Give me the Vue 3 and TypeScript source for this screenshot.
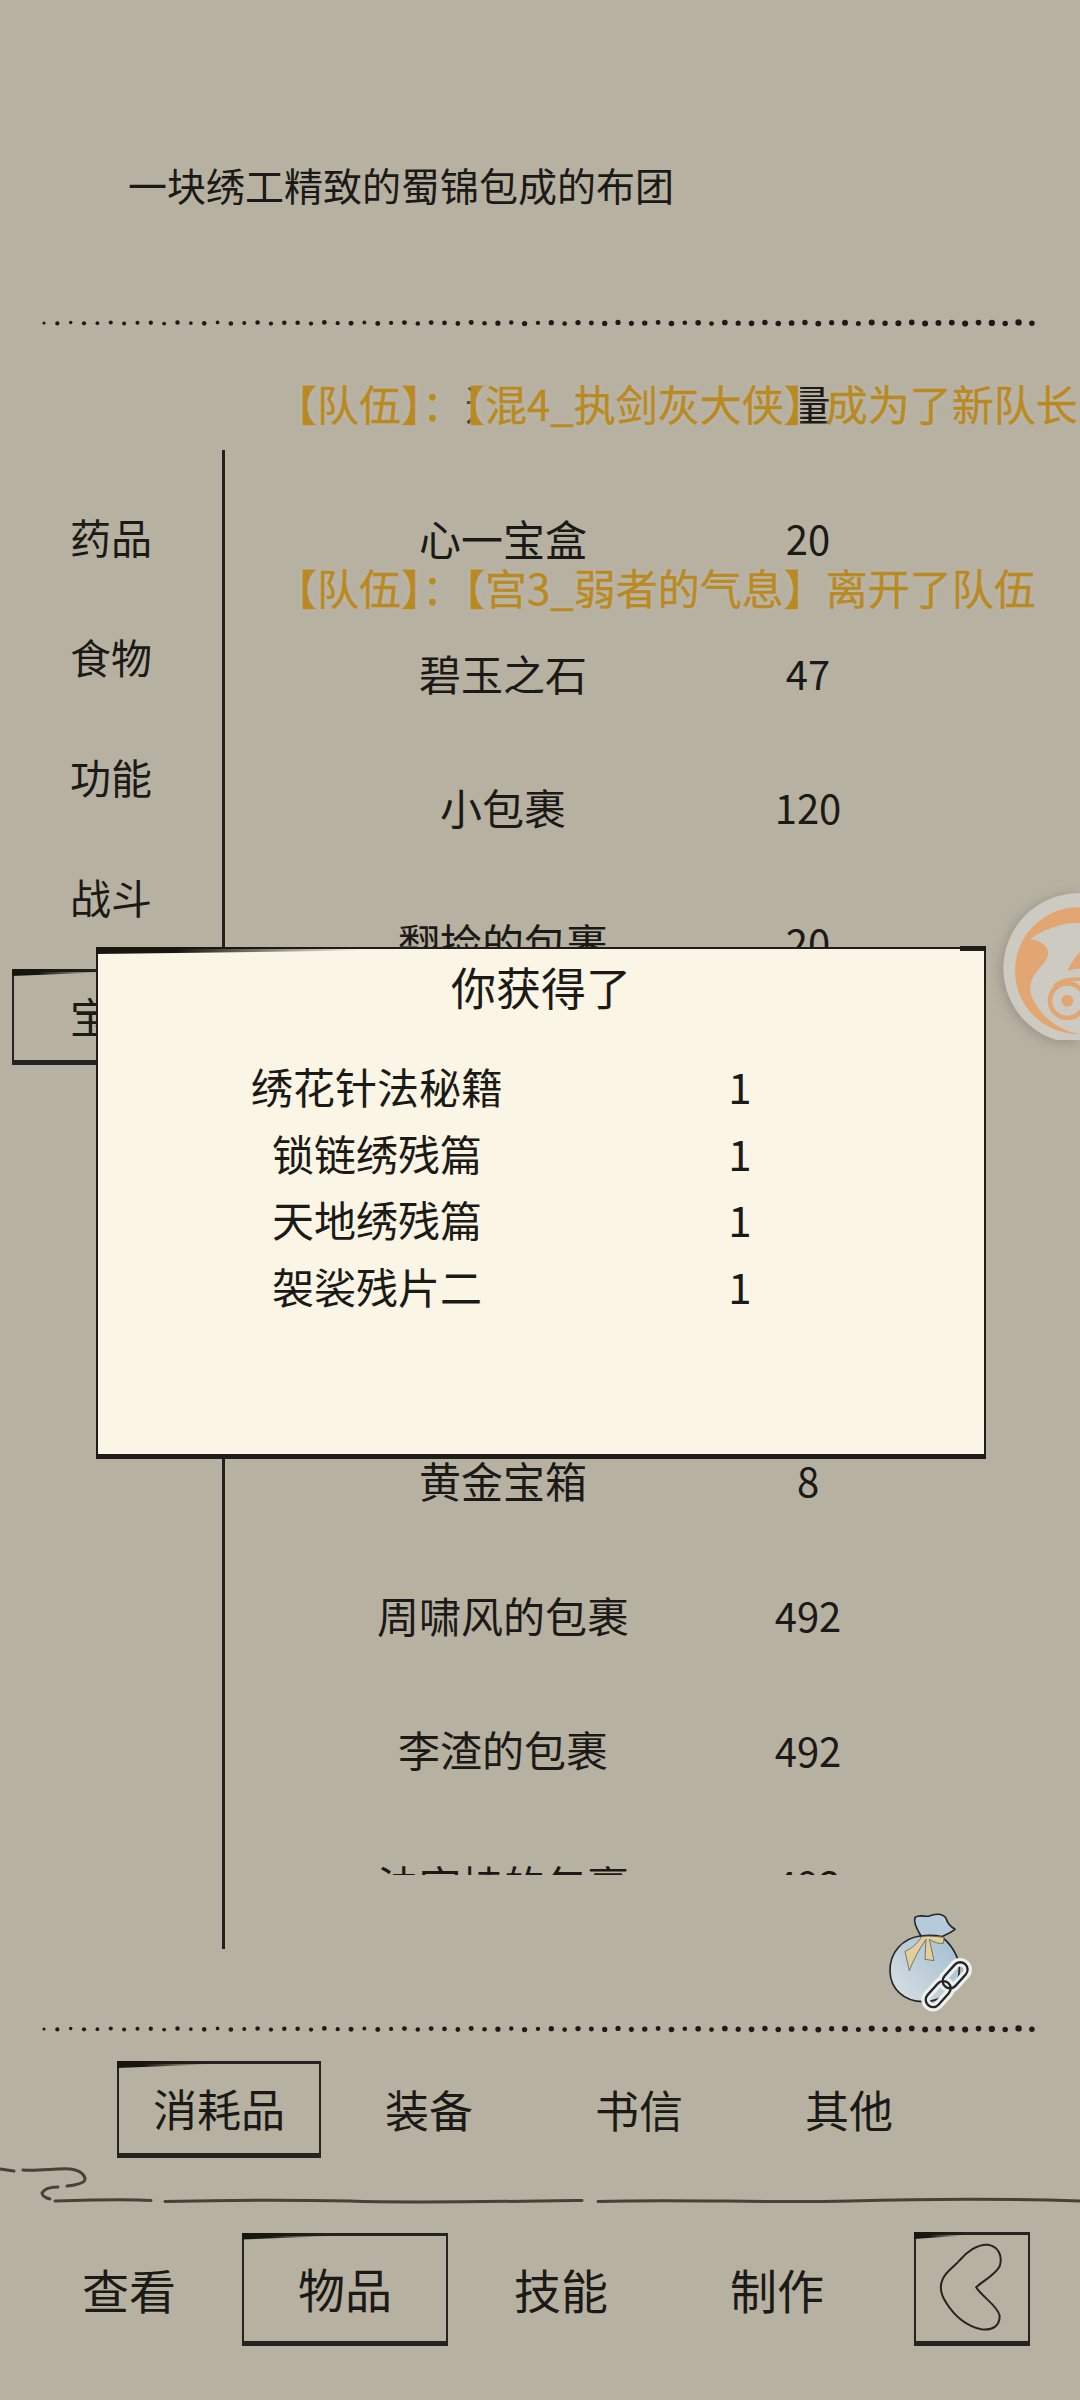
<script setup lang="ts">
interface Item {
  name: string;
  count: number | null;
}

const categories = ["药品", "食物", "功能", "战斗", "宝箱"];

const items: Item[] = [
  { name: "心一宝盒", count: 20 },
  { name: "碧玉之石", count: 47 },
  { name: "小包裹", count: 120 },
  { name: "翻捡的包裹", count: 20 },
  { name: "", count: null },
  { name: "", count: null },
  { name: "", count: null },
  { name: "黄金宝箱", count: 8 },
  { name: "周啸风的包裹", count: 492 },
  { name: "李渣的包裹", count: 492 },
  { name: "法空持的包裹", count: 492 },
];

const rewards = ["绣花针法秘籍", "锁链绣残篇", "天地绣残篇", "袈裟残片二"];
const tabs = ["消耗品", "装备", "书信", "其他"];
const navs = ["查看", "物品", "技能", "制作"];

// ink dots get heavier towards the right end of the line
const dots = Array.from({ length: 75 }, (_, i) => ({
  x: 4 + i * 13.35,
  y: 4 + Math.sin(i * 2.3) * 0.6,
  r: 1.6 + (i / 74) * 1.1 + Math.abs(Math.sin(i * 1.7)) * 0.5,
}));
</script>

<template>
  <div class="page">
    <p class="desc">一块绣工精致的蜀锦包成的布团</p>

    <svg class="dots" width="1000" height="8" viewBox="0 0 1000 8">
      <circle v-for="(d, i) in dots" :key="i" :cx="d.x" :cy="d.y" :r="d.r" fill="#1c1b18" />
    </svg>

    <div class="list-head">
      <span class="col-name">道具</span>
      <span class="col-name">数量</span>
    </div>

    <div class="main">
      <ul class="side">
        <li v-for="(c, i) in categories" :key="c" class="side-item" :class="{ ink: i === 4 }">{{ c }}</li>
      </ul>
      <div class="list-col">
        <div class="list">
          <div v-for="(item, i) in items" :key="i" class="row">
            <span class="col-name">{{ item.name }}</span>
            <span class="col-count">{{ item.count }}</span>
          </div>
        </div>
      </div>
    </div>

    <svg class="dots dots-bottom" width="1000" height="8" viewBox="0 0 1000 8">
      <circle v-for="(d, i) in dots" :key="i" :cx="d.x" :cy="d.y" :r="d.r" fill="#1c1b18" />
    </svg>

    <div class="tabs">
      <div v-for="(t, i) in tabs" :key="t" class="tab">
        <span class="tab-label" :class="{ ink: i === 0 }">{{ t }}</span>
      </div>
    </div>

    <svg class="brush" width="1080" height="44" viewBox="0 2160 1080 44" fill="none" stroke="#46413a" stroke-width="3" stroke-linecap="round">
      <path d="M0 2167L14 2169" />
      <path d="M23 2168C40 2169 58 2166 70 2167C80 2168 85 2173 85 2177C85 2181 76 2183 67 2184" />
      <path d="M58 2185C50 2185 44 2187 42 2191C42 2194 46 2196 50 2197" />
      <path d="M55 2199C90 2198 125 2197 151 2198.5" />
      <path d="M165 2199.5C230 2198 300 2198 350 2199C400 2201 470 2200 582 2198.5" />
      <path d="M598 2199.5C680 2197 760 2201 850 2199C920 2197 990 2196 1080 2199" />
    </svg>

    <nav class="nav">
      <div v-for="(n, i) in navs" :key="n" class="nav-item">
        <span class="nav-label" :class="{ ink: i === 1 }">{{ n }}</span>
      </div>
      <div class="back ink">
        <svg width="116" height="114" viewBox="70 70 345 340" fill="none" stroke="#26241f" stroke-width="6">
          <path d="M205 155C225 130 260 105 290 108C320 112 335 140 325 172C310 200 275 215 255 235C270 262 320 290 325 320C325 350 305 365 270 360C225 350 190 320 165 280C145 250 145 220 165 195C178 178 195 168 205 155Z" />
        </svg>
      </div>
    </nav>

    <!-- floating layers -->
    <div class="chat">
      <div>【队伍】：<span class="chat-name">【混4_执剑灰大侠】</span>成为了新队长</div>
      <div>【队伍】：【宫3_弱者的气息】离开了队伍</div>
    </div>

    <div class="dialog ink">
      <h2 class="dialog-title">你获得了</h2>
      <div v-for="r in rewards" :key="r" class="reward">
        <span class="reward-name">{{ r }}</span>
        <span class="reward-count">1</span>
      </div>
    </div>

    <svg class="bag" width="120" height="140" viewBox="0 0 360 420">
      <defs>
        <linearGradient id="bagFill" x1="0.1" y1="0.9" x2="0.9" y2="0.2">
          <stop offset="0" stop-color="#d6dee2" />
          <stop offset="0.55" stop-color="#bccdd8" />
          <stop offset="1" stop-color="#a9c3d3" />
        </linearGradient>
      </defs>
      <path d="M180 168C130 175 88 215 90 275C92 325 130 365 190 365C255 365 300 320 298 265C295 215 260 180 240 168Z" fill="url(#bagFill)" stroke="#23262a" stroke-width="5" />
      <path d="M183 168C172 150 160 125 165 112C180 102 195 112 208 108C225 100 250 100 258 115C262 130 268 138 285 148C270 160 255 165 245 170C225 165 200 165 183 168Z" fill="#b5cadb" stroke="#23262a" stroke-width="5" stroke-linejoin="round" />
      <path d="M185 170C170 195 150 208 135 214L148 272C160 240 178 205 198 178L195 238L222 242L208 178C222 188 240 192 250 190L252 172C230 170 205 166 185 170Z" fill="#e3cf9e" stroke="#6a6350" stroke-width="2.5" stroke-linejoin="round" />
      <g fill="none" transform="translate(-10 -6) rotate(42 270 320)">
        <rect x="248" y="237" width="44" height="90" rx="22" stroke="#eef0ee" stroke-width="26" />
        <rect x="248" y="313" width="44" height="90" rx="22" stroke="#eef0ee" stroke-width="26" />
        <rect x="248" y="313" width="44" height="90" rx="22" stroke="#23262a" stroke-width="7" />
        <rect x="248" y="237" width="44" height="90" rx="22" stroke="#23262a" stroke-width="7" />
      </g>
    </svg>

    <svg class="ball" width="100" height="160" viewBox="0 0 300 480">
      <circle cx="295" cy="265" r="225" fill="#cdcac1" />
      <circle cx="295" cy="272" r="190" fill="#e2a673" />
      <path d="M150 178C190 150 250 125 300 130V462C250 455 190 420 160 360C135 310 165 280 195 245C215 220 205 185 150 178Z" fill="#cdcac1" />
      <path d="M300 215C285 232 272 250 262 272C275 268 288 266 300 266Z" fill="#e2a673" />
      <path d="M222 318C245 302 275 296 300 298" fill="none" stroke="#e2a673" stroke-width="11" />
      <circle cx="262" cy="362" r="52" fill="none" stroke="#e2a673" stroke-width="14" />
      <circle cx="262" cy="362" r="18" fill="#e2a673" />
    </svg>
  </div>
</template>

<style>
html,
body {
  margin: 0;
  background: #b7b1a2;
}
</style>

<style scoped>
.page {
  position: relative;
  width: 1080px;
  height: 2400px;
  overflow: hidden;
  background: #b7b1a2;
  color: #1b1a17;
  font-family: "Noto Sans CJK SC", "Noto Sans", sans-serif;
  font-size: 41px;
  line-height: 1.2;
}

.desc {
  height: 158px;
  margin: 0;
  padding: 161px 0 0 128px;
  font-size: 39px;
}

.dots {
  display: block;
  margin-left: 40px;
}

.list-head {
  display: grid;
  grid-template-columns: 370px 194px;
  align-items: center;
  height: 94px;
  margin-top: 29px;
  padding-left: 322px;
}

.col-name,
.col-count {
  text-align: center;
  white-space: nowrap;
}

.col-name {
  font-size: 42px;
}

.col-count {
  font-size: 40px;
}

.main {
  display: flex;
  height: 1499px;
}

.side {
  list-style: none;
  width: 222px;
  margin: 0;
  padding: 39px 0 0 12px;
  box-sizing: border-box;
}

.side-item {
  display: flex;
  align-items: center;
  justify-content: center;
  width: 198px;
  height: 96px;
  margin-bottom: 24px;
  box-sizing: border-box;
}

.list-col {
  flex: 1;
  border-left: 3px solid #23211d;
}

.list {
  height: 1425px;
  overflow: hidden;
  padding-left: 93px;
  padding-top: 21px;
  box-sizing: border-box;
}

.row {
  display: grid;
  grid-template-columns: 370px 240px;
  align-items: center;
  height: 134.6px;
}

.dots-bottom {
  margin-top: 76px;
}

.tabs {
  display: flex;
  margin-top: 28px;
  padding-left: 114px;
}

.tab {
  display: flex;
  justify-content: center;
  width: 210px;
}

.tab-label {
  display: flex;
  align-items: center;
  justify-content: center;
  width: 204px;
  height: 97px;
  box-sizing: border-box;
  font-size: 44px;
}

.brush {
  display: block;
  margin-top: 4px;
}

.nav {
  display: flex;
  align-items: center;
  margin-top: 26px;
  padding-left: 21px;
}

.nav-item {
  display: flex;
  justify-content: center;
  width: 216px;
}

.nav-label {
  display: flex;
  align-items: center;
  justify-content: center;
  width: 206px;
  height: 113px;
  box-sizing: border-box;
  font-size: 47px;
}

.back {
  width: 116px;
  height: 114px;
  margin-left: 29px;
  box-sizing: border-box;
}

.back svg {
  display: block;
  margin: -3px 0 0 -2px;
}

/* hand drawn frame: thin sides, heavy bottom, brushed top-left */
.ink {
  position: relative;
  border: 2px solid #25231f;
  border-top-width: 3px;
  border-bottom-width: 5px;
}

.ink::before {
  content: "";
  position: absolute;
  top: -3px;
  left: -2px;
  width: 45%;
  height: 7px;
  background: linear-gradient(90deg, #17160f, #17160f 30%, rgba(23, 22, 15, 0));
  clip-path: polygon(0 0, 100% 0, 100% 50%, 0 100%);
}

.chat {
  position: absolute;
  top: 378px;
  left: 275px;
  display: flex;
  flex-direction: column;
  gap: 134px;
  color: #ba8a22;
  font-size: 42px;
  white-space: nowrap;
  text-shadow: 0 0 3px #bdb9ac, 0 0 6px #bdb9ac;
  -webkit-text-stroke: 0.4px #ba8a22;
}

/* the name hides most of the list header beneath it, both ends stay visible */
.chat-name {
  background: linear-gradient(
    90deg,
    transparent 12px,
    #b7b1a2 12px,
    #b7b1a2 calc(100% - 26px),
    transparent calc(100% - 26px)
  );
}

.dialog {
  position: absolute;
  top: 947px;
  left: 96px;
  width: 890px;
  height: 512px;
  box-sizing: border-box;
  background: #fbf5e5;
  border-color: #1f1d19;
  border-top-width: 2px;
}

.dialog::before {
  top: -2px;
  width: 30%;
}

/* heavier stub on the top right corner */
.dialog::after {
  content: "";
  position: absolute;
  top: -3px;
  right: -2px;
  width: 26px;
  height: 5px;
  background: #1f1d19;
}

.dialog-title {
  margin: 10px 0 38px;
  font-size: 45px;
  font-weight: 400;
  line-height: 56px;
  text-align: center;
}

.reward {
  display: grid;
  grid-template-columns: 558px 168px;
  align-items: center;
  height: 66.5px;
  font-size: 42px;
}

.reward-name {
  text-align: center;
  white-space: nowrap;
}

.reward-count {
  text-align: center;
}

.bag {
  position: absolute;
  top: 1880px;
  left: 860px;
}

.ball {
  position: absolute;
  top: 880px;
  right: 0;
  filter: drop-shadow(-2px 2px 6px rgba(60, 55, 45, 0.25));
}
</style>
